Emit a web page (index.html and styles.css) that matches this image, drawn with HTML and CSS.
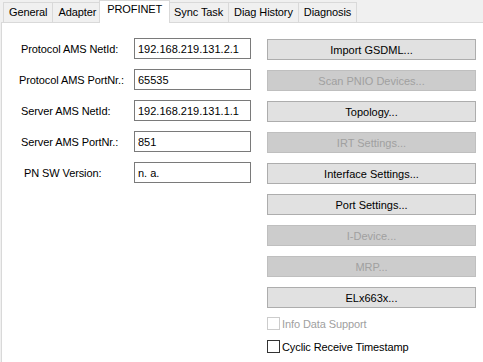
FILE: index.html
```html
<!DOCTYPE html>
<html lang="en">
<head>
    <meta charset="UTF-8">
    <title>PROFINET</title>
    <link rel="stylesheet" href="styles.css">
</head>
<body>
    <!-- Tab strip -->
    <div class="tabs">
        <div class="tab">General</div>
        <div class="tab">Adapter</div>
        <div class="tab active">PROFINET</div>
        <div class="tab">Sync Task</div>
        <div class="tab">Diag History</div>
        <div class="tab">Diagnosis</div>
    </div>

    <!-- Tab page -->
    <div class="panel">
        <div class="fields">
            <div class="field">
                <label class="field-label">Protocol AMS NetId:</label>
                <input class="text-box" type="text" value="192.168.219.131.2.1">
            </div>
            <div class="field">
                <label class="field-label tight">Protocol AMS PortNr.:</label>
                <input class="text-box" type="text" value="65535">
            </div>
            <div class="field">
                <label class="field-label">Server AMS NetId:</label>
                <input class="text-box" type="text" value="192.168.219.131.1.1">
            </div>
            <div class="field">
                <label class="field-label">Server AMS PortNr.:</label>
                <input class="text-box" type="text" value="851">
            </div>
            <div class="field">
                <label class="field-label indent">PN SW Version:</label>
                <input class="text-box" type="text" value="n. a.">
            </div>
        </div>

        <div class="actions">
            <button class="btn">Import GSDML...</button>
            <button class="btn" disabled>Scan PNIO Devices...</button>
            <button class="btn">Topology...</button>
            <button class="btn" disabled>IRT Settings...</button>
            <button class="btn">Interface Settings...</button>
            <button class="btn">Port Settings...</button>
            <button class="btn" disabled>I-Device...</button>
            <button class="btn" disabled>MRP...</button>
            <button class="btn">ELx663x...</button>

            <label class="check disabled"><span class="box"></span>Info Data Support</label>
            <label class="check"><span class="box"></span>Cyclic Receive Timestamp</label>
        </div>
    </div>
</body>
</html>
```

FILE: styles.css
```css
* {
    margin: 0;
    padding: 0;
    box-sizing: border-box;
}

body {
    width: 483px;
    height: 362px;
    background: #f0f0f0;
    font-family: 'Liberation Sans', Arial, sans-serif;
    font-size: 11px;
    letter-spacing: -0.1px;
    color: #000;
    overflow: hidden;
}

/* Tab strip */
.tabs {
    display: flex;
    align-items: flex-end;
    height: 22px;
    padding-left: 3px;
}

.tab {
    height: 20px;
    line-height: 18px;
    padding: 0 5px;
    border: 1px solid #d9d9d9;
    border-bottom: none;
    margin-right: -1px;
    background: #f0f0f0;
    white-space: nowrap;
}

.tab.active {
    height: 23px;
    line-height: 17px;
    padding: 0 7px;
    margin: 0 -2px -1px -2px;
    background: #fff;
    position: relative;
    z-index: 1;
}

/* Tab page */
.panel {
    height: 340px;
    margin-left: 1px;
    background: #fff;
    border-top: 1px solid #d9d9d9;
    border-left: 1px solid #d9d9d9;
    display: grid;
    grid-template-columns: 248px 209px;
    column-gap: 17px;
    padding-top: 15px;
}

.fields {
    display: flex;
    flex-direction: column;
    gap: 10px;
}

.field {
    display: grid;
    grid-template-columns: 132px 117px;
    align-items: center;
    height: 21px;
}

.field-label {
    padding-left: 19px;
    white-space: nowrap;
}

.field-label.tight {
    padding-left: 17px;
}

.field-label.indent {
    padding-left: 22px;
}

.text-box {
    height: 21px;
    border: 1px solid #7a7a7a;
    padding: 0 3px;
    font: inherit;
    color: #000;
    background: #fff;
    outline: none;
}

/* Buttons and options */
.actions {
    display: flex;
    flex-direction: column;
    gap: 10px;
    padding-top: 1px;
}

.btn {
    height: 21px;
    border: 1px solid #adadad;
    background: #e1e1e1;
    font: inherit;
    color: #000;
}

.btn:disabled {
    background: #cccccc;
    border-color: #bfbfbf;
    color: #a0a0a0;
}

.check {
    display: flex;
    align-items: center;
    gap: 2px;
    height: 13px;
    margin-top: -1px;
}

.check + .check {
    margin-top: 0;
}

.box {
    width: 13px;
    height: 13px;
    border: 1px solid #333;
    background: #fff;
}

.check.disabled {
    color: #a0a0a0;
}

.check.disabled .box {
    border-color: #cccccc;
}
```
